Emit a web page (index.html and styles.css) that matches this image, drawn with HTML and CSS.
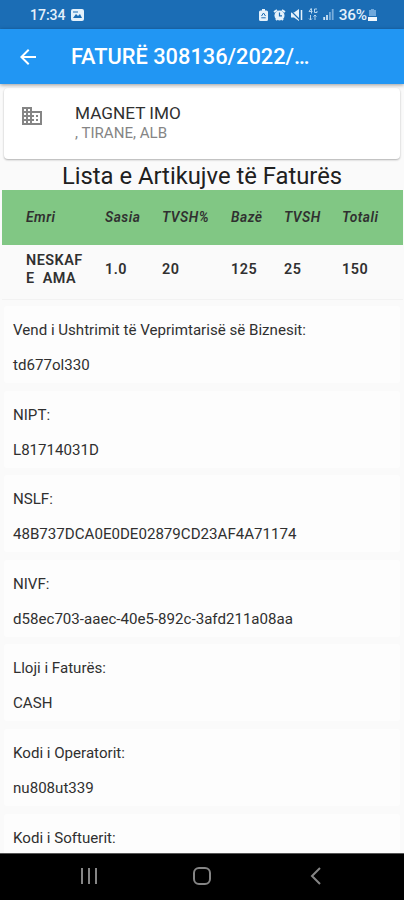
FILE: index.html
```html
<!DOCTYPE html>
<html lang="sq">

<head>
    <meta charset="UTF-8">
    <meta name="viewport" content="width=device-width, initial-scale=1.0">
    <title>Faturë</title>
    <link rel="stylesheet" href="styles.css">
</head>

<body>
    <div class="status-bar">
        <span class="time">17:34</span>
        <svg class="picture-icon" width="13" height="12" viewBox="0 0 13 12">
            <rect width="13" height="12" rx="2" fill="#e4f1fb" />
            <path d="M2 9l3-4 2 2 2-2 2 4z" fill="#1b6db5" />
            <path d="M2 3h5" stroke="#1b6db5" />
        </svg>
        <div class="status-icons">
            <svg width="9" height="12" viewBox="0 0 9 12">
                <path d="M3 0h3v1.500h1.500Q9 1.500 9 3v7.500Q9 12 7.500 12h-6Q0 12 0 10.500V3Q0 1.500 1.500 1.500H3z" fill="#e4f1fb" />
                <path d="M2.500 7l2-3 2 3M2.300 8.800h4.400" fill="none" stroke="#1b6db5" />
            </svg>
            <svg width="13" height="12" viewBox="0 0 13 12">
                <path d="M1 3l3-2M12 3L9 1M3 11l1-1M10 11l-1-1" stroke="#e4f1fb" stroke-width="2" />
                <circle cx="6.500" cy="6.500" r="5" fill="#e4f1fb" />
                <path d="M6.500 3.500v3.300H9" fill="none" stroke="#1b6db5" stroke-width="1.200" />
            </svg>
            <svg width="13" height="12" viewBox="0 0 13 12">
                <path d="M1 3.500h3l5-3.500v12L4 8.500H1z" fill="#e4f1fb" />
                <path d="M0 1l10 10" stroke="#1b6db5" stroke-width="1.200" />
                <path d="M11.500 1v10" stroke="#e4f1fb" stroke-width="1.500" />
            </svg>
            <svg width="10" height="13" viewBox="0 0 10 13">
                <path d="M3.500 0L1 3.500h3.500M3.500 1v4.500M9 1H6.500v3.500H9V3M2.500 7v5M1 10.500L2.500 12 4 10.500M7 12V7M5.500 8.500L7 7l1.500 1.500" fill="none" stroke="#b5d6ef" />
            </svg>
            <svg width="11" height="11" viewBox="0 0 11 11">
                <path d="M1.200 11V8M4 11V6" stroke="#cfe4f5" stroke-width="1.800" />
                <path d="M6.900 11V3M9.700 11V0" stroke="#78addb" stroke-width="1.800" />
            </svg>
        </div>
        <span class="percent">36%</span>
        <svg class="battery-icon" width="9" height="12" viewBox="0 0 9 12">
            <path d="M3 0h3v1h2v6H1V1h2z" fill="#6ea8dc" />
            <path d="M0 8h9v4H0z" fill="#f1f8fd" />
        </svg>
    </div>

    <header class="app-bar">
        <svg width="24" height="24" viewBox="0 0 24 24">
            <path d="M20 11H7.830l5.590-5.590L12 4l-8 8 8 8 1.410-1.410L7.830 13H20z" fill="#fff" />
        </svg>
        <h1>FATURË 308136/2022/…</h1>
    </header>

    <main class="content">
        <div class="company-card">
            <svg width="24" height="24" viewBox="0 0 24 24">
                <path d="M12 7V3H2v18h20V7H12zM6 19H4v-2h2v2zm0-4H4v-2h2v2zm0-4H4V9h2v2zm0-4H4V5h2v2zm4 12H8v-2h2v2zm0-4H8v-2h2v2zm0-4H8V9h2v2zm0-4H8V5h2v2zm10 12h-8v-2h2v-2h-2v-2h2v-2h-2V9h8v10zm-2-8h-2v2h2v-2zm0 4h-2v2h2v-2z" fill="#858585" />
            </svg>
            <div>
                <div class="company-name">MAGNET IMO</div>
                <div class="company-address">, TIRANE, ALB</div>
            </div>
        </div>

        <h2>Lista e Artikujve të Faturës</h2>

        <div class="items">
            <div class="row head">
                <span>Emri</span>
                <span>Sasia</span>
                <span>TVSH%</span>
                <span>Bazë</span>
                <span>TVSH</span>
                <span>Totali</span>
            </div>
            <div class="row">
                <span class="item-name">NESKAF<br>E&nbsp; AMA</span>
                <span>1.0</span>
                <span>20</span>
                <span>125</span>
                <span>25</span>
                <span>150</span>
            </div>
        </div>

        <div class="details">
            <div class="detail">
                <p>Vend i Ushtrimit të Veprimtarisë së Biznesit:</p>
                <p>td677ol330</p>
            </div>
            <div class="detail">
                <p>NIPT:</p>
                <p>L81714031D</p>
            </div>
            <div class="detail">
                <p>NSLF:</p>
                <p>48B737DCA0E0DE02879CD23AF4A71174</p>
            </div>
            <div class="detail">
                <p>NIVF:</p>
                <p>d58ec703-aaec-40e5-892c-3afd211a08aa</p>
            </div>
            <div class="detail">
                <p>Lloji i Faturës:</p>
                <p>CASH</p>
            </div>
            <div class="detail">
                <p>Kodi i Operatorit:</p>
                <p>nu808ut339</p>
            </div>
            <div class="detail">
                <p>Kodi i Softuerit:</p>
            </div>
        </div>
    </main>

    <nav class="nav-bar">
        <svg width="18" height="18" viewBox="0 0 18 18">
            <path d="M2 1v16M9 1v16M16 1v16" stroke="#858585" stroke-width="2" />
        </svg>
        <svg width="18" height="18" viewBox="0 0 18 18">
            <rect x="1" y="1" width="16" height="16" rx="5" fill="none" stroke="#858585" stroke-width="2" />
        </svg>
        <svg width="18" height="18" viewBox="0 0 18 18">
            <path d="M14 1L6 9l8 8" fill="none" stroke="#858585" stroke-width="2" />
        </svg>
    </nav>
</body>

</html>
```
FILE: styles.css
```css
* {
    box-sizing: border-box;
}

body {
    margin: 0;
    height: 900px;
    display: flex;
    flex-direction: column;
    overflow: hidden;
    background-color: #fafafa;
    font-family: Roboto, sans-serif;
    color: #303030;
}

h1,
h2,
p {
    margin: 0;
    font-weight: 400;
    white-space: nowrap;
}

svg {
    display: block;
    flex-shrink: 0;
}

.status-bar {
    height: 29px;
    flex-shrink: 0;
    display: flex;
    align-items: center;
    padding: 0 27px 0 30px;
    background-color: #1b6db5;
    color: #e4f1fb;
    font-size: 14px;
    font-weight: 500;
}

.picture-icon {
    margin-left: 5px;
}

.status-icons {
    display: flex;
    align-items: center;
    gap: 4.7px;
    margin-left: auto;
}

.percent {
    margin-left: 5px;
    font-size: 15.3px;
    letter-spacing: -0.1px;
}

.battery-icon {
    margin-left: 1px;
}

.app-bar {
    height: 55px;
    flex-shrink: 0;
    display: flex;
    align-items: center;
    gap: 31px;
    padding-left: 16px;
    background-color: #2196f3;
    color: #fff;
    box-shadow: 0 1px 4px rgba(0, 0, 0, 0.4);
    z-index: 1;
}

h1 {
    font-size: 21.8px;
    font-weight: 500;
}

.content {
    flex: 1;
    min-height: 0;
    overflow: hidden;
}

.company-card {
    height: 71px;
    margin: 4px 4px 0;
    padding: 16px 16px 0;
    display: flex;
    gap: 31px;
    background-color: #fff;
    border-radius: 4px;
    box-shadow: 0 1px 2px rgba(0, 0, 0, 0.3);
}

.company-name {
    font-size: 17.2px;
    line-height: 19px;
}

.company-address {
    font-size: 15.1px;
    line-height: 21px;
    color: #858585;
}

h2 {
    height: 31px;
    padding-top: 2px;
    font-size: 23.8px;
    line-height: 31px;
    text-align: center;
    color: #202020;
}

/* invoice lines */
.items {
    margin: 0 1px 0 2px;
    border-bottom: 1px solid #f2f2f2;
}

.row {
    height: 55px;
    display: grid;
    grid-template-columns: 79px 57px 69px 53px 58px 1fr;
    align-items: center;
    padding-left: 24px;
    font-size: 14.4px;
    font-weight: 600;
    letter-spacing: 0.5px;
}

.row:last-child {
    height: 54px;
    padding-bottom: 5px;
}

.row.head {
    padding-bottom: 1px;
    background-color: #81c784;
    font-size: 13.8px;
    font-style: italic;
}

.item-name {
    line-height: 18px;
}

.details {
    display: flex;
    flex-direction: column;
    gap: 7.6px;
    padding: 6px 4px 0;
}

.detail {
    height: 77px;
    flex-shrink: 0;
    display: flex;
    flex-direction: column;
    gap: 15px;
    padding: 14px 9px 0;
    background-color: #fdfdfd;
    border-radius: 3px;
    font-size: 15.1px;
    line-height: 20px;
}

.nav-bar {
    height: 47px;
    flex-shrink: 0;
    display: flex;
    justify-content: center;
    align-items: center;
    gap: 95px;
    padding-bottom: 2px;
    background-color: #000;
    border-top: 1px solid #555;
}
```
